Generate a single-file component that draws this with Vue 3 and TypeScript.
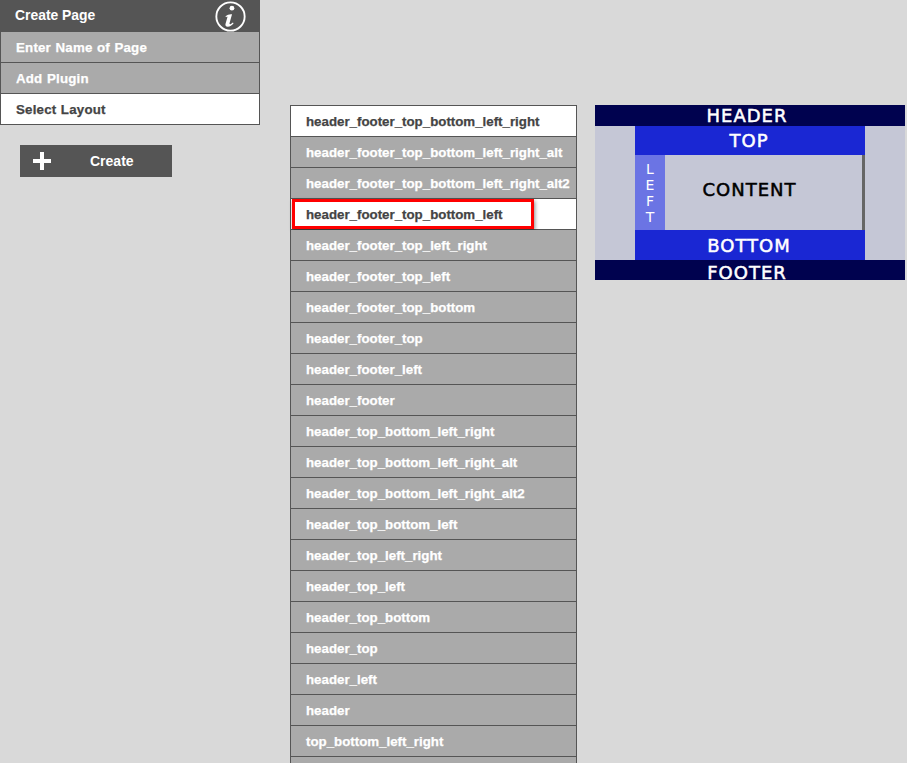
<script setup lang="ts">
const menu: { label: string; active?: boolean }[] = [
  { label: 'Enter Name of Page' },
  { label: 'Add Plugin' },
  { label: 'Select Layout', active: true },
]
const layouts: string[] = [
  'header_footer_top_bottom_left_right',
  'header_footer_top_bottom_left_right_alt',
  'header_footer_top_bottom_left_right_alt2',
  'header_footer_top_bottom_left',
  'header_footer_top_left_right',
  'header_footer_top_left',
  'header_footer_top_bottom',
  'header_footer_top',
  'header_footer_left',
  'header_footer',
  'header_top_bottom_left_right',
  'header_top_bottom_left_right_alt',
  'header_top_bottom_left_right_alt2',
  'header_top_bottom_left',
  'header_top_left_right',
  'header_top_left',
  'header_top_bottom',
  'header_top',
  'header_left',
  'header',
  'top_bottom_left_right',
  'top_bottom_left',
]
const whiteRows = [0, 3]
</script>

<template>
  <div class="page">
    <aside class="side">
      <div class="panel">
        <div class="panel-head">
          <span>Create Page</span>
          <svg class="info" width="31" height="31" viewBox="0 0 30 30" aria-hidden="true">
            <circle cx="15" cy="15" r="13.7" fill="none" stroke="#fff" stroke-width="1.8" />
            <circle cx="16.4" cy="7" r="2.3" fill="#fff" />
            <path transform="translate(-0.5 1.6)" d="M10.6 13.4 C12.4 11.6 14.8 11 17 11.3 L14.6 19.8 C14.3 21 15.1 21.2 15.9 20.6 L17.8 19.1 L18.5 19.9 C16.8 21.9 15 23.2 12.8 23.2 C10.9 23.2 10.2 22 10.7 20.4 L12.5 14.2 C12.7 13.3 12 13.3 11.2 14.1 Z" fill="#fff" />
          </svg>
        </div>
        <div v-for="m in menu" :key="m.label" class="row menu-row" :class="{ on: m.active }">{{ m.label }}</div>
      </div>
      <button class="create" type="button">
        <svg class="plus" width="20" height="20" viewBox="0 0 20 20" aria-hidden="true">
          <path d="M8 1h4v7h7v4h-7v7H8v-7H1V8h7z" fill="#fff" />
        </svg>
        <span>Create</span>
      </button>
    </aside>

    <main class="list">
      <div
        v-for="(l, i) in layouts"
        :key="l"
        class="row item"
        :class="{ on: whiteRows.includes(i) }"
      >
        {{ l }}
        <span v-if="i === 3" class="mark"></span>
      </div>
    </main>

    <section class="preview">
      <div class="bar h">HEADER</div>
      <div class="mid">
        <div class="inner">
          <div class="band t">TOP</div>
          <div class="centre">
            <div class="left"><span>L</span><span>E</span><span>F</span><span>T</span></div>
            <div class="content">CONTENT</div>
          </div>
          <div class="band b">BOTTOM</div>
        </div>
      </div>
      <div class="bar f">FOOTER</div>
    </section>
  </div>
</template>

<style>
html, body { margin: 0; background: #d9d9d9; overflow: hidden; }
</style>

<style scoped>
.page {
  width: 907px;
  height: 763px;
  overflow: hidden;
  background: #d9d9d9;
  display: flex;
  align-items: flex-start;
  font-family: "Liberation Sans", Arial, sans-serif;
  font-weight: 700;
  font-size: 13.3px;
}
.side { width: 260px; flex: none; }
.panel { border: 1px solid #555; border-top: 0; box-sizing: border-box; }
.panel-head {
  height: 32px;
  margin: 0 -1px;
  background: #555;
  color: #fff;
  font-size: 13.9px;
  display: flex;
  align-items: center;
  justify-content: space-between;
  padding: 0 15px 2px;
  box-sizing: border-box;
}
.info { margin: 2px -1px 0 0; }
.row {
  height: 31px;
  box-sizing: border-box;
  background: #aaa;
  color: #fff;
  border-bottom: 1px solid #555;
  padding-left: 15px;
  line-height: 32px;
  position: relative;
  -webkit-text-stroke: 0.25px currentColor;
}
.row:last-child { border-bottom: 0; }
.menu-row { letter-spacing: 0.2px; word-spacing: 0.6px; }
.panel .row:last-child { height: 30px; }
.row.on { background: #fff; color: #444; }
.create {
  margin: 20px 0 0 20px;
  width: 152px;
  height: 32px;
  border: 0;
  padding: 0 0 0 12px;
  background: #555;
  color: #fff;
  font: inherit;
  font-size: 14px;
  display: flex;
  align-items: center;
}
.create span { margin-left: 38px; }
.plus { flex: none; }
.list {
  margin: 105px 0 0 30px;
  width: 287px;
  flex: none;
  border: 1px solid #555;
  box-sizing: border-box;
}
.mark {
  position: absolute;
  left: 1px;
  top: 0;
  width: 242px;
  height: 30px;
  box-sizing: border-box;
  border: 3px solid #f00;
  box-shadow: 1px 2px 4px rgba(0, 0, 0, 0.45);
}
.preview {
  margin: 105px 0 0 18px;
  width: 310px;
  flex: none;
  font-family: "DejaVu Sans", sans-serif;
  text-align: center;
  color: #fff;
  font-weight: 400;
  font-size: 18px;
  letter-spacing: 1px;
  -webkit-text-stroke: 0.5px currentColor;
}
.bar { background: #00024f; padding-right: 6px; box-sizing: border-box; }
.bar.h { height: 21px; line-height: 21px; }
.bar.f { height: 20px; padding-top: 5px; line-height: 15px; }
.mid { background: #c5c7d6; padding: 0 40px; height: 134px; box-sizing: border-box; }
.inner { height: 134px; display: flex; flex-direction: column; }
.band { background: #1a27d3; text-align: center; padding-right: 2px; box-sizing: border-box; }
.band.t { height: 29px; line-height: 29px; }
.band.b { height: 30px; line-height: 31px; }
.centre { height: 75px; display: flex; }
.left {
  width: 30px;
  background: #6b74e4;
  font-size: 14px;
  letter-spacing: 0;
  -webkit-text-stroke: 0;
  padding-top: 6px;
  box-sizing: border-box;
  display: flex;
  flex-direction: column;
  line-height: 16px;
}
.content {
  flex: 1;
  color: #000;
  line-height: 69px;
  border-right: 3px solid #666;
  padding-right: 28px;
  box-sizing: border-box;
}
</style>
